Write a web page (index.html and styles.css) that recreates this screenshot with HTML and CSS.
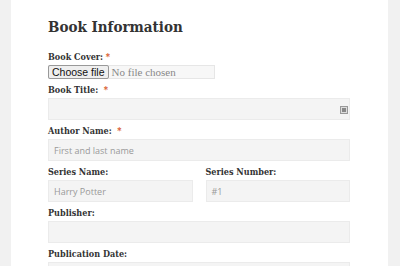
FILE: index.html
```html
<!DOCTYPE html>
<html lang="en">
<head>
    <meta charset="UTF-8">
    <title>Book Information</title>
    <link rel="stylesheet" href="styles.css">
</head>
<body>
    <div class="page">
        <h1 class="title">Book Information</h1>

        <!-- cover -->
        <div class="field field-file">
            <label class="label">Book Cover: <span class="req">*</span></label>
            <div class="file-input">
                <span class="file-btn">Choose file</span>
                <span class="file-name">No file chosen</span>
            </div>
        </div>

        <div class="field">
            <label class="label">Book Title: &nbsp;<span class="req">*</span></label>
            <div class="input">
                <span class="input-icon"><span></span></span>
            </div>
        </div>

        <div class="field">
            <label class="label">Author Name: &nbsp;<span class="req">*</span></label>
            <div class="input"><span class="ph">First and last name</span></div>
        </div>

        <!-- series -->
        <div class="row">
            <div class="field">
                <label class="label">Series Name:</label>
                <div class="input"><span class="ph">Harry Potter</span></div>
            </div>
            <div class="field">
                <label class="label">Series Number:</label>
                <div class="input"><span class="ph">#1</span></div>
            </div>
        </div>

        <div class="field">
            <label class="label">Publisher:</label>
            <div class="input"></div>
        </div>

        <div class="field">
            <label class="label">Publication Date:</label>
            <div class="input"></div>
        </div>
    </div>
</body>
</html>
```

FILE: styles.css
```css
body {
    margin: 0;
    background-color: #f1f1f1;
    font-family: 'DejaVu Serif', serif;
    color: #333;
    overflow: hidden;
}

.page {
    margin-left: 11px;
    width: 377px;
    height: 266px;
    background-color: #fff;
    padding: 15px 0 0 37px;
    box-sizing: border-box;
    overflow: hidden;
}

.title {
    margin: 0 0 11px;
    font-size: 15px;
    font-stretch: condensed;
    line-height: 24px;
    font-weight: bold;
    color: #333;
}

.field {
    width: 302px;
    margin-bottom: 4px;
}

.label {
    display: block;
    font-size: 9px;
    font-stretch: condensed;
    font-weight: bold;
    line-height: 15px;
    color: #333;
}

.req {
    color: #d54e21;
}

/* file input */
.field-file {
    margin-bottom: 4px;
}

.file-input {
    display: flex;
    align-items: center;
    width: 167px;
    height: 14px;
    border: 1px solid #e6e6e6;
    background-color: #f7f7f7;
    box-sizing: border-box;
}

.file-btn {
    font-family: 'Liberation Sans', Arial, sans-serif;
    font-size: 10.5px;
    line-height: 12px;
    color: #111;
    background-color: #efefef;
    border: 1px solid #999;
    border-radius: 2px;
    padding: 0 3px;
    margin-left: -1px;
}

.file-name {
    font-family: 'Liberation Serif', serif;
    font-size: 11px;
    color: #888;
    margin-left: 3px;
}

.input {
    position: relative;
    height: 22px;
    border: 1px solid #ebebeb;
    background-color: #f4f4f4;
    box-sizing: border-box;
    display: flex;
    align-items: center;
    padding-left: 5px;
}

.ph {
    font-family: 'Open Sans', sans-serif;
    font-size: 9px;
    color: #999;
}

.input-icon {
    position: absolute;
    right: 1px;
    top: 7px;
    width: 6px;
    height: 6px;
    border: 1px solid #999;
    background-color: #ddd;
}

.input-icon span {
    display: block;
    margin: 1px;
    width: 4px;
    height: 4px;
    background-color: #888;
}

.row {
    display: flex;
    gap: 13px;
    width: 302px;
}

.row .field {
    width: 145px;
}
```
